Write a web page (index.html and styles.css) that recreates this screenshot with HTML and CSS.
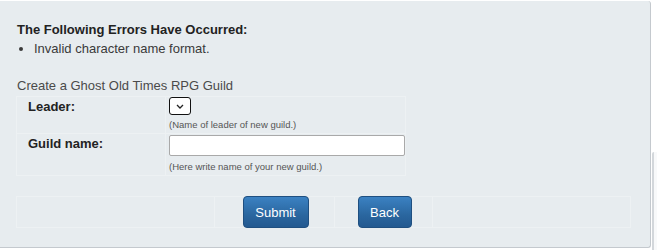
FILE: index.html
```html
<!DOCTYPE html>
<html>
<head>
<meta charset="utf-8">
<link rel="stylesheet" href="styles.css">
</head>
<body>
<div class="page">
  <div class="panel">
    <div class="err-title">The Following Errors Have Occurred:</div>
    <ul class="err-list">
      <li>Invalid character name format.</li>
    </ul>
    <div class="form-title">Create a Ghost Old Times RPG Guild</div>
    <table class="form-table">
      <tr class="row-leader">
        <td class="label">Leader:</td>
        <td class="field">
          <div class="select"><svg width="8" height="5" viewBox="0 0 8 5"><path d="M1 1 L4 4 L7 1" fill="none" stroke="#222" stroke-width="1.3"/></svg></div>
          <div class="help">(Name of leader of new guild.)</div>
        </td>
      </tr>
      <tr class="row-name">
        <td class="label">Guild name:</td>
        <td class="field">
          <input class="text" type="text">
          <div class="help help-name">(Here write name of your new guild.)</div>
        </td>
      </tr>
    </table>
    <table class="btn-table">
      <tr>
        <td class="c1"></td>
        <td class="c2"><button class="btn btn-submit">Submit</button></td>
        <td class="c3"><button class="btn btn-back">Back</button></td>
        <td class="c4"></td>
      </tr>
    </table>
  </div>
  <div class="side"></div>
</div>
</body>
</html>
```
FILE: styles.css
```css
html, body {
  margin: 0;
  padding: 0;
  background: #ffffff;
}
body {
  font-family: "Liberation Sans", Arial, sans-serif;
  font-size: 13px;
  color: #333;
  overflow: hidden;
}
.page {
  display: flex;
  align-items: flex-start;
  width: 657px;
  height: 250px;
}
.panel {
  box-sizing: border-box;
  width: 656px;
  margin-left: -5px;
  margin-top: 1px;
  padding: 21px 0 19px 21px;
  background: #e7ecef;
  border: 1px solid #c4c9ce;
  border-top: none;
  border-radius: 0 3px 3px 0;
}
.err-title {
  font-weight: bold;
  line-height: 15px;
  color: #222;
}
.err-list {
  margin: 4px 0 0 0;
  padding-left: 17px;
  line-height: 15px;
  color: #3a3a3a;
}
.form-title {
  margin-top: 22px;
  line-height: 15px;
  color: #4a4a4a;
}
.form-table {
  margin: 3px 0 0 -1px;
  width: 390px;
  border-collapse: collapse;
}
.form-table td {
  border: 1px solid #edf1f3;
  vertical-align: top;
  padding: 0;
}
.form-table td.label {
  width: 137px;
  padding: 2px 0 0 11px;
  font-weight: bold;
  line-height: 15px;
  color: #222;
}
.form-table td.field {
  padding: 0 0 2px 3px;
}
.row-name td.field {
  padding-top: 1px;
}
.select {
  box-sizing: border-box;
  width: 22px;
  height: 18px;
  border: 1.5px solid #111;
  border-radius: 3px;
  background: #fff;
  display: flex;
  align-items: center;
  justify-content: center;
}
.help {
  font-size: 9.5px;
  line-height: 12px;
  color: #555;
  margin-top: 4px;
}
.help-name {
  margin-top: 5px;
}
.text {
  display: block;
  box-sizing: border-box;
  width: 236px;
  height: 21px;
  margin: 0;
  border: 1px solid #a9a9a9;
  border-radius: 2px;
  background: #fff;
  padding: 0 3px;
}
.btn-table {
  margin: 20px 0 0 -1px;
  width: 615px;
  border-collapse: collapse;
}
.btn-table td {
  border: 1px solid #edf1f3;
  padding: 0;
  height: 30px;
  text-align: center;
  vertical-align: middle;
}
.btn-table .c1 { width: 197px; }
.btn-table .c2 { width: 119px; }
.btn-table .c3 { width: 97px; }
.btn {
  box-sizing: border-box;
  height: 32px;
  margin: -1px 0;
  border: 1px solid #1f4f80;
  border-radius: 4px;
  background: linear-gradient(#3b81c2, #2a669f 60%, #235990);
  color: #fff;
  font-family: "Liberation Sans", Arial, sans-serif;
  font-size: 13px;
  display: inline-block;
  vertical-align: middle;
  cursor: pointer;
}
.btn-submit { width: 66px; margin-left: 2px; }
.btn-back { width: 54px; margin-left: 2px; }
.side {
  flex: 1;
  margin-top: 152px;
  margin-left: 1px;
  height: 98px;
  border-left: 2px solid #d3d7db;
  border-top-left-radius: 2px;
  background: #f8f9fa;
}
```
